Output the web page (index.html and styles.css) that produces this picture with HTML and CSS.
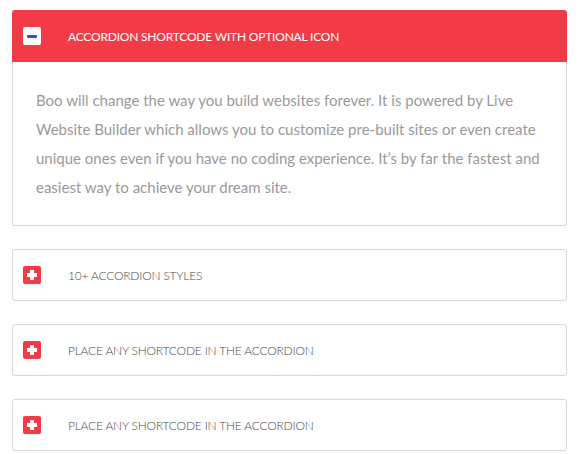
FILE: index.html
```html
<!DOCTYPE html>
<html>
<head>
<meta charset="utf-8">
<link rel="stylesheet" href="styles.css">
</head>
<body>
<div class="accordion">
  <div class="panel open">
    <div class="head">
      <span class="icon minus"><span class="bar"></span></span>
      <span class="title">ACCORDION SHORTCODE WITH OPTIONAL ICON</span>
    </div>
    <div class="content">
      <p>Boo will change the way you build websites forever. It is powered by Live Website Builder which allows you to customize pre-built sites or even create unique ones even if you have no coding experience. It’s by far the fastest and easiest way to achieve your dream site.</p>
    </div>
  </div>
  <div class="panel">
    <div class="head">
      <span class="icon plus"><span class="h"></span><span class="v"></span></span>
      <span class="title">10+ ACCORDION STYLES</span>
    </div>
  </div>
  <div class="panel">
    <div class="head">
      <span class="icon plus"><span class="h"></span><span class="v"></span></span>
      <span class="title">PLACE ANY SHORTCODE IN THE ACCORDION</span>
    </div>
  </div>
  <div class="panel">
    <div class="head">
      <span class="icon plus"><span class="h"></span><span class="v"></span></span>
      <span class="title">PLACE ANY SHORTCODE IN THE ACCORDION</span>
    </div>
  </div>
</div>
</body>
</html>
```

FILE: styles.css
```css
html, body { margin: 0; padding: 0; background: #fff; }
body { padding: 10px 13px 0 12px; font-family: Lato, "Open Sans", sans-serif; }
.accordion { display: flex; flex-direction: column; gap: 23px; }
.panel { border: 1px solid #d6d6d6; border-radius: 3px; background: #fff; }
.panel.open { border: none; }
.head { display: flex; align-items: center; height: 50px; padding-left: 10px; }
.panel.open .head { height: 52px; background: #f23b47; border-radius: 3px 3px 0 0; padding-left: 11px; }
.icon { position: relative; width: 18px; height: 18px; border-radius: 2px; flex: none; }
.icon.plus { background: #f23b47; }
.icon.minus { background: #fff; }
.icon .bar { position: absolute; left: 4px; top: 8px; width: 10px; height: 3px; border-radius: 1px; background: #3545e0; }
.icon .h { position: absolute; left: 4px; top: 7px; width: 10px; height: 4px; background: #fff; }
.icon .v { position: absolute; left: 7px; top: 4px; width: 4px; height: 10px; background: #fff; }
.title { margin-left: 27px; font-size: 12px; font-weight: 300; color: #4a4a4a; letter-spacing: -0.2px; }
.panel.open .title { color: #fff; font-weight: 400; }
.content { border: 1px solid #d6d6d6; border-top: none; border-radius: 0 0 3px 3px; padding: 24px 23px 23px 23px; }
.content p { margin: 0; font-size: 15px; line-height: 29px; color: #9a9a9a; }
```
